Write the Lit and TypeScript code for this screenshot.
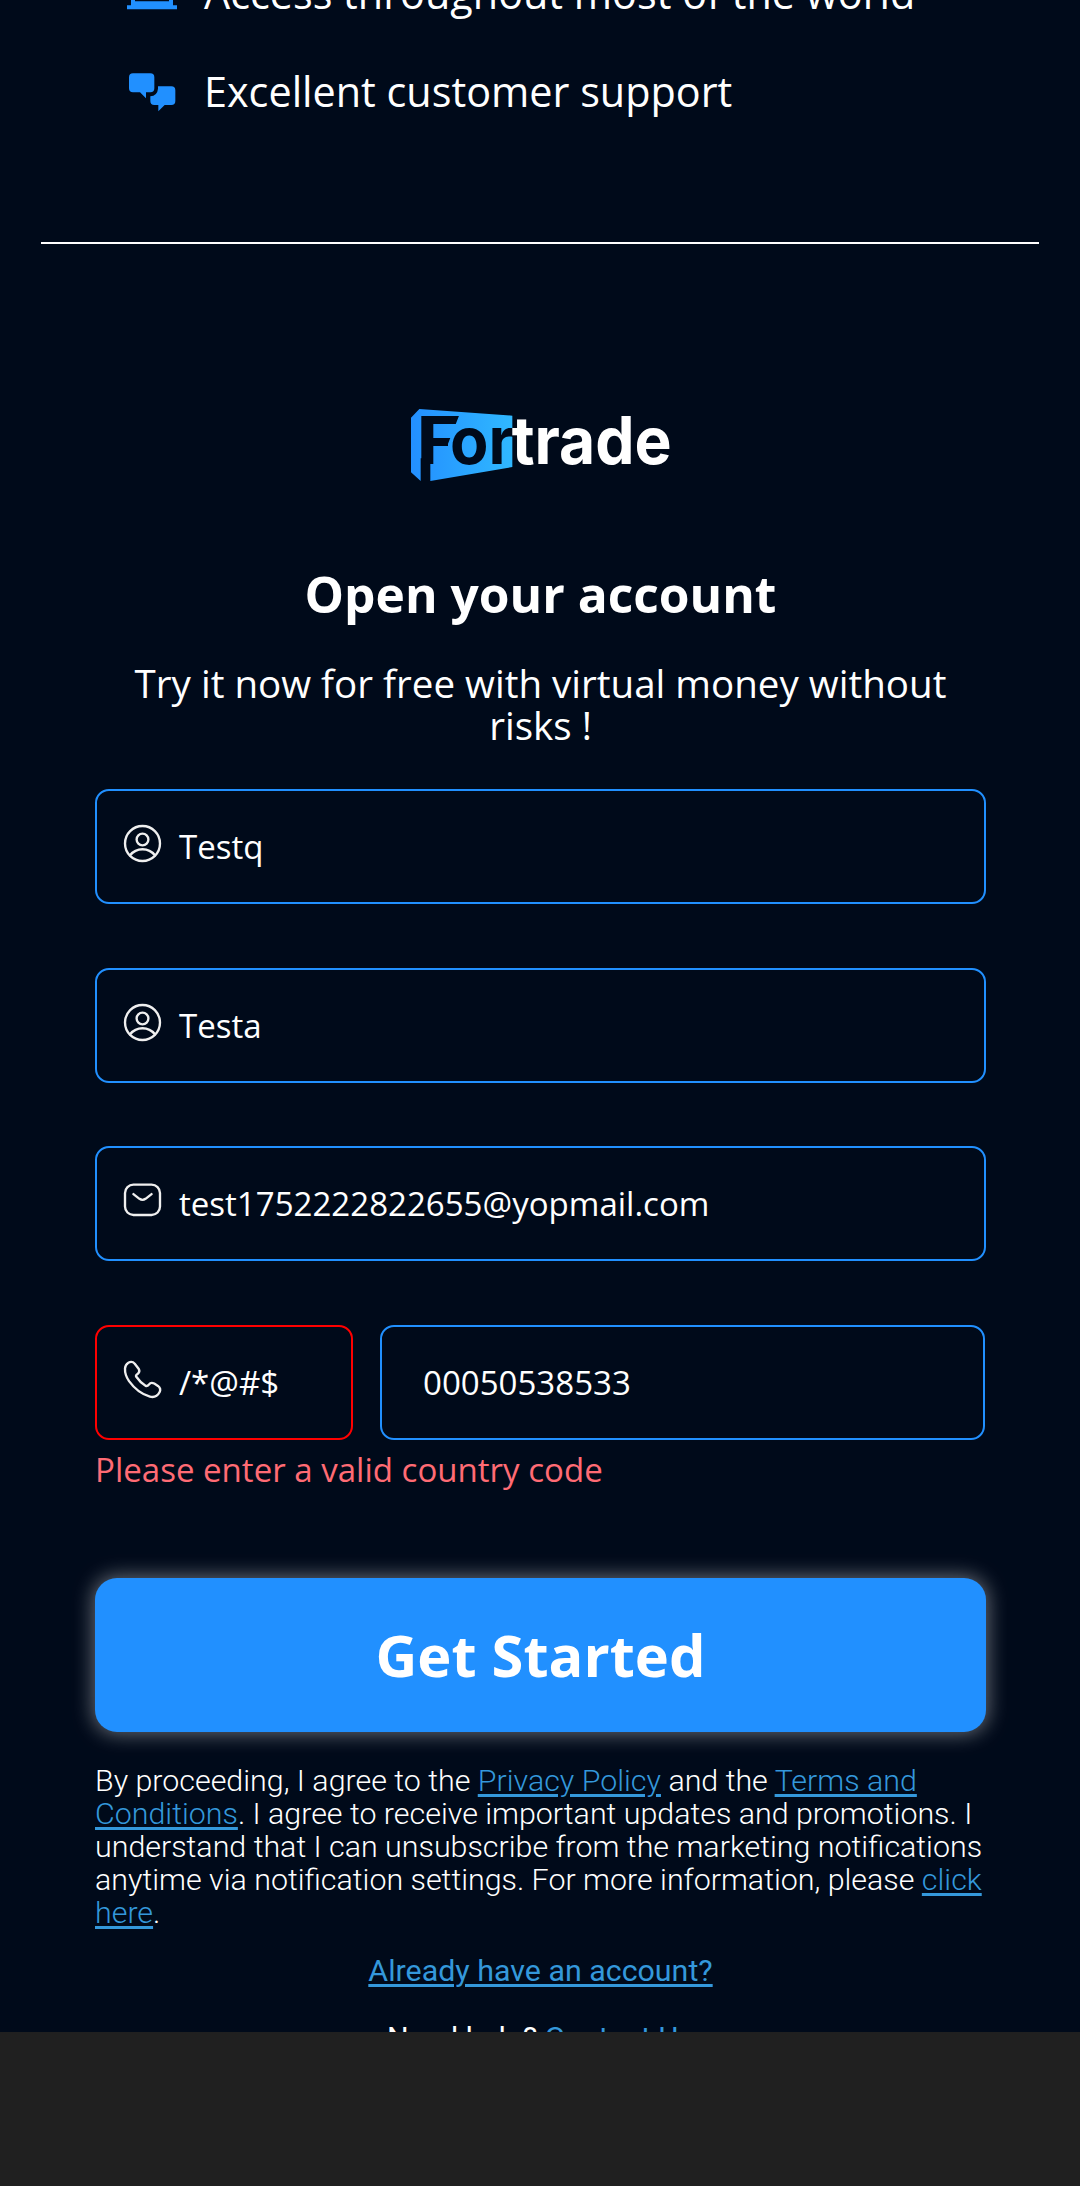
import { LitElement, html, css, svg } from "lit";
import { customElement } from "lit/decorators.js";

const userIcon = svg`<circle cx="55" cy="55" r="52"/><circle cx="55" cy="43" r="17.5"/><path d="M18 90Q32 72 55 72T92 90"/>`;
const mailIcon = svg`<rect x="3" y="8" width="104" height="90" rx="25"/><path d="M28 36L46 50Q55 56 64 50L82 36"/>`;
const phoneIcon = svg`<path d="M13 5Q24-1 32 8L44 24Q48 31 42 37Q34 42 36 46Q48 64 65 74Q69 76 75 69Q80 62 90 67L101 74Q111 82 106 92Q96 111 77 106Q41 96 15 60Q2 41 3 22Q4 10 13 5Z"/>`;

@customElement("app-root")
export class AppRoot extends LitElement {
  static styles = css`
    :host { display: block; height: 2186px; overflow: hidden; background: #202020; color: #fff; font-family: "Open Sans", "Noto Sans", sans-serif; }
    * { box-sizing: border-box; }
    .page { height: 2032px; overflow: hidden; background: #000a1a; display: flex; flex-direction: column; }
    .features { height: 242px; padding: 0 41px 121px 127px; flex: none; display: flex; flex-direction: column; justify-content: flex-end; gap: 40px; }
    .feature { display: flex; align-items: center; height: 58px; gap: 27px; font-size: 41.35px; line-height: 56px; white-space: nowrap; }
    .feature span { padding-bottom: 2px; }
    .feature svg { width: 50px; height: 40px; flex: none; fill: #2190ff; }
    .rule { flex: none; height: 2px; margin: 0 41px; background: #fff; }
    .logo { flex: none; width: 280px; height: 100px; margin: 151px 0 0 400px; }
    .logo text { font-family: Inter, Arial, sans-serif; font-weight: 700; font-size: 196px; }
    .form { flex: none; width: 891px; margin-left: 95px; display: flex; flex-direction: column; }
    .title { margin: 64px 0 0; height: 70px; line-height: 70px; font-size: 49.7px; font-weight: 700; text-align: center; white-space: nowrap; }
    .sub { margin: 33px 0 0; font-size: 38.55px; line-height: 42px; text-align: center; }
    .fields { margin-top: 43px; display: flex; flex-direction: column; gap: 63.3px; }
    .row { display: flex; gap: 27px; }
    .field { height: 115.3px; width: 100%; border: 2px solid #2190ff; border-radius: 14px; padding-left: 27px; display: flex; align-items: center; font-size: 33.05px; }
    .field svg { width: 37px; height: 37px; flex: none; margin: -6px 18px 0 0; fill: none; stroke: #efefef; stroke-width: 7; stroke-linecap: round; stroke-linejoin: round; overflow: visible; }
    .code { width: 258px; border-color: #f00; }
    .number { width: 605px; padding-left: 41px; }
    .error { margin: 6px 0 0; height: 48px; line-height: 48px; font-size: 33.05px; color: #ff6b74; white-space: nowrap; }
    .submit { margin-top: 84px; height: 154px; border: 0; border-radius: 22px; background: #2190ff; color: #fff; font: 700 57.8px/154px "Open Sans", sans-serif; padding: 0; box-shadow: 0 0 20px 2px rgba(255,255,255,.4); }
    .legal { margin: 32px -10px 0 0; font: 300 30.38px/33px Roboto, sans-serif; white-space: nowrap; }
    a { color: #3498db; text-decoration: underline; text-decoration-thickness: 3px; text-underline-offset: 3px; }
    .account { margin-top: 25px; text-align: center; font: 400 30.38px/33px Roboto, sans-serif; }
    .help { margin-top: 34px; text-align: center; font: 400 30.38px/33px Roboto, sans-serif; }
    .help a { text-decoration: none; }
  `;

  private field(icon: unknown, value: string, kind = "") {
    return html`<div class="field ${kind}">${icon ? html`<svg viewBox="0 0 110 110">${icon}</svg>` : ""}<span>${value}</span></div>`;
  }

  render() {
    return html`
      <div class="page">
        <div class="features">
          <div class="feature">
            <svg viewBox="0 0 150 120"><path fill-rule="evenodd" d="M24 0H126Q138 0 138 12V94H150V106H0V94H12V12Q12 0 24 0ZM24 12V82H126V12Z"/></svg>
            <span>Access throughout most of the world</span>
          </div>
          <div class="feature">
            <svg viewBox="0 0 150 120"><path d="M18 4H70Q82 4 82 16V49Q82 61 70 61H57V79L39 61H18Q6 61 6 49V16Q6 4 18 4Z"/><path d="M93 43H133Q145 43 145 55V87Q145 99 133 99H113L94 118V99H82Q70 99 70 87V73Q91 71 93 50Z"/></svg>
            <span>Excellent customer support</span>
          </div>
        </div>
        <div class="rule"></div>
        <svg class="logo" viewBox="0 0 840 300">
          <defs>
            <linearGradient id="blue"><stop offset="0" stop-color="#238fff"/><stop offset="1" stop-color="#30b8ff"/></linearGradient>
            <clipPath id="slant"><path d="M0 0H177V62L144 146V300H0Z"/></clipPath>
          </defs>
          <path fill="url(#blue)" d="M58 42L337 62V216L91 258V190H62V258L33 232V68Z"/>
          <g fill="#000a1a">
            <text clip-path="url(#slant)" x="48" y="207" textLength="142" lengthAdjust="spacingAndGlyphs">F</text>
            <text x="150" y="207" textLength="192" lengthAdjust="spacingAndGlyphs">or</text>
          </g>
          <text fill="#fff" x="335" y="207" textLength="480" lengthAdjust="spacingAndGlyphs">trade</text>
        </svg>
        <div class="form">
          <h1 class="title">Open your account</h1>
          <p class="sub">Try it now for free with virtual money without<br>risks !</p>
          <div class="fields">
            ${this.field(userIcon, "Testq")}
            ${this.field(userIcon, "Testa")}
            ${this.field(mailIcon, "test1752222822655@yopmail.com")}
            <div class="row">${this.field(phoneIcon, "/*@#$", "code")}${this.field(null, "00050538533", "number")}</div>
          </div>
          <p class="error">Please enter a valid country code</p>
          <button class="submit">Get Started</button>
          <div class="legal">By proceeding, I agree to the <a>Privacy Policy</a> and the <a>Terms and<br>Conditions</a>. I agree to receive important updates and promotions. I<br>understand that I can unsubscribe from the marketing notifications<br>anytime via notification settings. For more information, please <a>click<br>here</a>.</div>
          <div class="account"><a>Already have an account?</a></div>
          <div class="help">Need help? <a>Contact Us</a></div>
        </div>
      </div>`;
  }
}
